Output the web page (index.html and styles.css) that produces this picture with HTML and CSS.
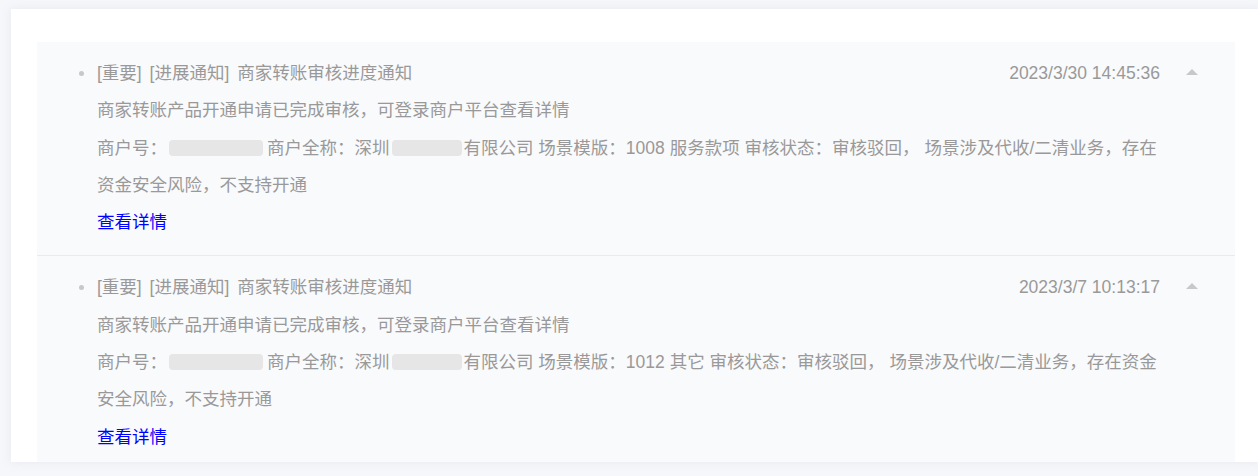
FILE: index.html
```html
<!DOCTYPE html>
<html>

<head>
  <meta charset="utf-8">
  <link rel="stylesheet" href="styles.css">
</head>

<body>
  <div class="card">
    <div class="notice-list">

      <div class="notice">
        <div class="dot"></div>
        <div class="notice-body">
          <div class="notice-head">
            <span class="notice-title">[重要] [进展通知] 商家转账审核进度通知</span>
            <span class="notice-time">2023/3/30 14:45:36</span>
          </div>
          <p>商家转账产品开通申请已完成审核，可登录商户平台查看详情</p>
          <p>商户号：<span class="masked masked-id"></span>商户全称：深圳<span class="masked masked-name"></span>有限公司 场景模版：1008 服务款项 审核状态：审核驳回， 场景涉及代收/二清业务，存在资金安全风险，不支持开通</p>
          <a class="detail-link">查看详情</a>
        </div>
        <div class="toggle"><span class="caret"></span></div>
      </div>

      <div class="notice">
        <div class="dot"></div>
        <div class="notice-body">
          <div class="notice-head">
            <span class="notice-title">[重要] [进展通知] 商家转账审核进度通知</span>
            <span class="notice-time">2023/3/7 10:13:17</span>
          </div>
          <p>商家转账产品开通申请已完成审核，可登录商户平台查看详情</p>
          <p>商户号：<span class="masked masked-id"></span>商户全称：深圳<span class="masked masked-name"></span>有限公司 场景模版：1012 其它 审核状态：审核驳回， 场景涉及代收/二清业务，存在资金安全风险，不支持开通</p>
          <a class="detail-link">查看详情</a>
        </div>
        <div class="toggle"><span class="caret"></span></div>
      </div>

    </div>
  </div>
</body>

</html>
```

FILE: styles.css
```css
* {
  margin: 0;
  padding: 0;
  box-sizing: border-box;
}

html,
body {
  width: 100vw;
  height: 100vh;
  overflow: hidden;
}

body {
  background: #f6f7fa;
  padding: 9px 0 0 11px;
  font-family: "Liberation Sans", "Noto Sans CJK SC", sans-serif;
  font-size: 17.5px;
  color: #999;
}

.card {
  width: 1250px;
  height: 453px;
  padding: 33px 26px 0;
  background: #fff;
  box-shadow: 0 0 10px rgba(160, 170, 200, 0.18);
  overflow: hidden;
}

.notice-list {
  background: #f9fafc;
}

.notice {
  display: flex;
  align-items: flex-start;
  padding: 13px 25px 14px 42px;
  line-height: 37.3px;
}

.notice + .notice {
  border-top: 1px solid #e8eaf0;
}

.dot {
  width: 5px;
  height: 5px;
  margin: 16px 13px 0 0;
  border-radius: 50%;
  background: #c8c8c8;
  flex-shrink: 0;
}

.notice-body {
  flex: 1;
  min-width: 0;
}

.notice-head {
  display: flex;
  justify-content: space-between;
}

.notice-title {
  word-spacing: 3px;
}

.notice-body p {
  word-break: break-all;
}

.masked {
  display: inline-block;
  height: 16px;
  vertical-align: -2px;
  background: #e6e6e6;
  border-radius: 4px;
}

.masked-id {
  width: 94px;
  margin: 0 4px 0 2px;
}

.masked-name {
  width: 70px;
  margin: 0 2px;
}

.detail-link {
  display: block;
  color: #0000ff;
  cursor: pointer;
}

.toggle {
  width: 50px;
  flex-shrink: 0;
  padding: 14px 0 0 26px;
  line-height: 0;
}

.caret {
  display: inline-block;
  border-left: 6px solid transparent;
  border-right: 6px solid transparent;
  border-bottom: 6px solid #c8c8c8;
}
```
